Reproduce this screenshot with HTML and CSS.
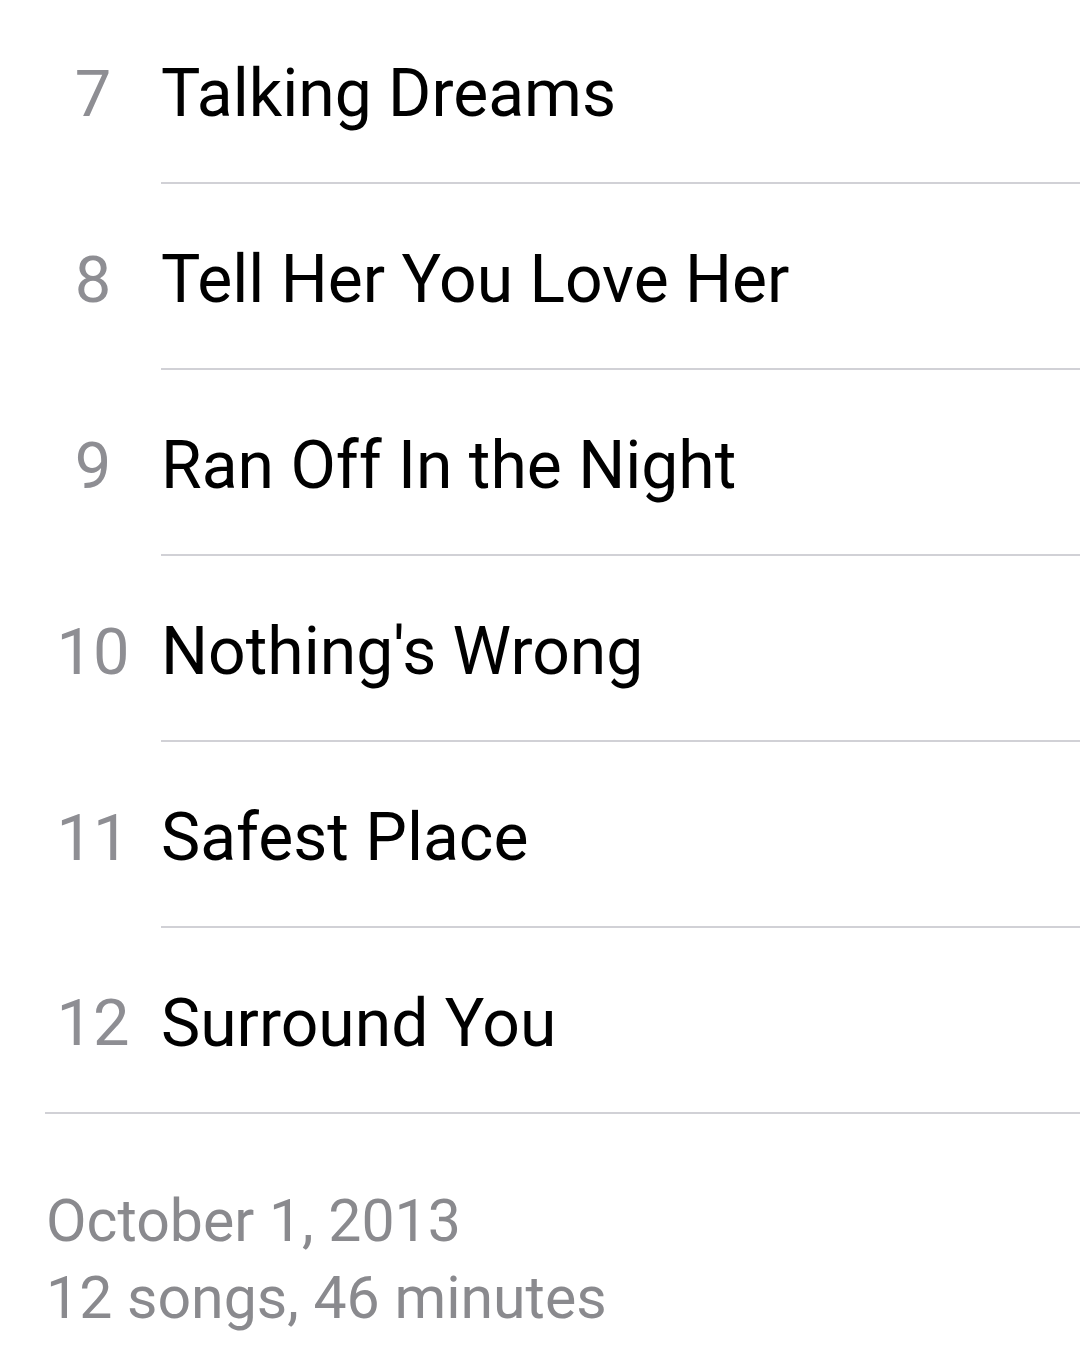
FILE: index.html
```html
<!DOCTYPE html>
<html lang="en">
<head>
    <meta charset="UTF-8">
    <meta name="viewport" content="width=device-width, initial-scale=1.0">
    <title>Album Tracks</title>
    <link rel="stylesheet" href="styles.css">
</head>
<body>
    <div class="tracklist">
        <div class="track">
            <span class="num">7</span>
            <span class="title">Talking Dreams</span>
        </div>
        <div class="track">
            <span class="num">8</span>
            <span class="title">Tell Her You Love Her</span>
        </div>
        <div class="track">
            <span class="num">9</span>
            <span class="title">Ran Off In the Night</span>
        </div>
        <div class="track">
            <span class="num">10</span>
            <span class="title">Nothing's Wrong</span>
        </div>
        <div class="track">
            <span class="num">11</span>
            <span class="title">Safest Place</span>
        </div>
        <div class="track last">
            <span class="num">12</span>
            <span class="title">Surround You</span>
        </div>
    </div>

    <div class="album-info">
        <p>October 1, 2013</p>
        <p>12 songs, 46 minutes</p>
    </div>
</body>
</html>
```

FILE: styles.css
```css
body {
    margin: 0;
    background: #fff;
    font-family: Roboto, "Liberation Sans", sans-serif;
}
.tracklist {
    margin-top: -2px;
    padding-left: 45px;
}
.track {
    display: flex;
    height: 186px;
}
.num {
    width: 96px;
    flex-shrink: 0;
    display: flex;
    align-items: center;
    justify-content: center;
    padding-top: 6px;
    font-size: 65px;
    color: #8e8e93;
}
.title {
    flex: 1;
    display: flex;
    align-items: center;
    margin-left: 20px;
    padding-top: 6px;
    font-size: 66px;
    color: #000;
    border-bottom: 2px solid #d1d1d6;
}
.track.last {
    border-bottom: 2px solid #d1d1d6;
    height: 184px;
}
.track.last .title {
    border-bottom: none;
}
.album-info {
    padding: 68px 0 0 46px;
    color: #8a8a8e;
    font-size: 59px;
}
.album-info p {
    margin: 0;
    line-height: 77px;
}
```
